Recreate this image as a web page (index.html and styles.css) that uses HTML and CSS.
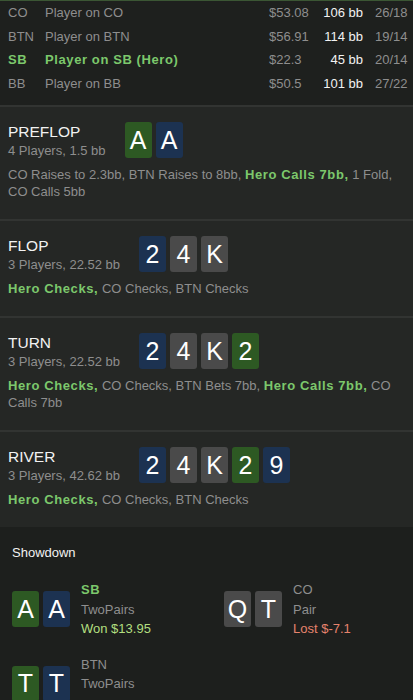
FILE: index.html
```html
<!DOCTYPE html>
<html lang="en">
<head>
<meta charset="UTF-8">
<meta name="viewport" content="width=device-width, initial-scale=1.0">
<title>Hand Replay</title>
<link rel="stylesheet" href="styles.css">
</head>
<body>
<div id="handView">
    <div class="players">
        <div class="player-row">
            <span class="pos">CO</span>
            <span class="name">Player on CO</span>
            <span class="stack">$53.08</span>
            <span class="bb">106 bb</span>
            <span class="ratio">26/18</span>
        </div>
        <div class="player-row">
            <span class="pos">BTN</span>
            <span class="name">Player on BTN</span>
            <span class="stack">$56.91</span>
            <span class="bb">114 bb</span>
            <span class="ratio">19/14</span>
        </div>
        <div class="player-row hero">
            <span class="pos">SB</span>
            <span class="name">Player on SB (Hero)</span>
            <span class="stack">$22.3</span>
            <span class="bb">45 bb</span>
            <span class="ratio">20/14</span>
        </div>
        <div class="player-row">
            <span class="pos">BB</span>
            <span class="name">Player on BB</span>
            <span class="stack">$50.5</span>
            <span class="bb">101 bb</span>
            <span class="ratio">27/22</span>
        </div>
    </div>

    <section class="street">
        <div class="street-head">
            <div class="street-info">
                <div class="street-name">PREFLOP</div>
                <div class="street-pot">4 Players, 1.5 bb</div>
            </div>
            <div class="board">
                <span class="card green">A</span>
                <span class="card blue">A</span>
            </div>
        </div>
        <p class="actions">CO Raises to 2.3bb, BTN Raises to 8bb, <b class="hero-act">Hero Calls 7bb,</b> 1 Fold, CO Calls 5bb</p>
    </section>

    <section class="street">
        <div class="street-head">
            <div class="street-info">
                <div class="street-name">FLOP</div>
                <div class="street-pot">3 Players, 22.52 bb</div>
            </div>
            <div class="board">
                <span class="card blue">2</span>
                <span class="card gray">4</span>
                <span class="card gray">K</span>
            </div>
        </div>
        <p class="actions"><b class="hero-act">Hero Checks,</b> CO Checks, BTN Checks</p>
    </section>

    <section class="street">
        <div class="street-head">
            <div class="street-info">
                <div class="street-name">TURN</div>
                <div class="street-pot">3 Players, 22.52 bb</div>
            </div>
            <div class="board">
                <span class="card blue">2</span>
                <span class="card gray">4</span>
                <span class="card gray">K</span>
                <span class="card green">2</span>
            </div>
        </div>
        <p class="actions"><b class="hero-act">Hero Checks,</b> CO Checks, BTN Bets 7bb, <b class="hero-act">Hero Calls 7bb,</b> CO Calls 7bb</p>
    </section>

    <section class="street">
        <div class="street-head">
            <div class="street-info">
                <div class="street-name">RIVER</div>
                <div class="street-pot">3 Players, 42.62 bb</div>
            </div>
            <div class="board">
                <span class="card blue">2</span>
                <span class="card gray">4</span>
                <span class="card gray">K</span>
                <span class="card green">2</span>
                <span class="card blue">9</span>
            </div>
        </div>
        <p class="actions"><b class="hero-act">Hero Checks,</b> CO Checks, BTN Checks</p>
    </section>

    <section class="showdown">
        <h3>Showdown</h3>
        <div class="hands">
            <div class="hand">
                <div class="board">
                    <span class="card green">A</span>
                    <span class="card blue">A</span>
                </div>
                <div class="hand-info">
                    <div class="hand-pos hero-act">SB</div>
                    <div>TwoPairs</div>
                    <div class="won">Won $13.95</div>
                </div>
            </div>
            <div class="hand">
                <div class="board">
                    <span class="card gray">Q</span>
                    <span class="card gray">T</span>
                </div>
                <div class="hand-info">
                    <div class="hand-pos">CO</div>
                    <div>Pair</div>
                    <div class="lost">Lost $-7.1</div>
                </div>
            </div>
            <div class="hand">
                <div class="board">
                    <span class="card green">T</span>
                    <span class="card blue">T</span>
                </div>
                <div class="hand-info">
                    <div class="hand-pos">BTN</div>
                    <div>TwoPairs</div>
                    <div>&nbsp;</div>
                </div>
            </div>
        </div>
    </section>
</div>
</body>
</html>
```

FILE: styles.css
```css
body {
    margin: 0;
    padding: 0;
    background-color: #1d1f1d;
    font-family: "Liberation Sans", Arial, sans-serif;
    font-size: 13px;
    color: #8e8e8e;
}
#handView {
    width: 413px;
}
.players {
    background-color: #1e201e;
    border-top: 1px solid #3b5634;
    padding-bottom: 10px;
}
.player-row {
    display: grid;
    grid-template-columns: 37px 224px 54px 40px 1fr;
    height: 23.5px;
    align-items: center;
    padding-left: 8px;
}
.player-row .bb {
    color: #f2f2f2;
    text-align: right;
}
.player-row .ratio {
    padding-left: 12px;
}
.player-row.hero .pos,
.player-row.hero .name {
    color: #7cc86c;
    font-weight: bold;
    letter-spacing: 0.6px;
}
.street {
    background-color: #252725;
    border-top: 2px solid #323432;
    padding: 15px 8px 19px;
}
.street-head {
    display: flex;
    align-items: flex-start;
}
.street-info {
    margin-right: 19px;
}
.street-name {
    color: #f2f2f2;
    font-size: 15.5px;
    line-height: 20px;
}
.street-pot {
    line-height: 17px;
}
.board {
    display: flex;
    gap: 4px;
}
.card {
    display: flex;
    align-items: center;
    justify-content: center;
    width: 27px;
    height: 36px;
    border-radius: 3px;
    color: #fff;
    font-size: 25px;
}
.card.green {
    background-color: #2d5923;
}
.card.blue {
    background-color: #1c3251;
}
.card.gray {
    background-color: #4a4a4a;
}
.actions {
    margin: 7px 0 0;
    line-height: 17px;
}
.hero-act {
    color: #7cc86c;
    font-weight: bold;
    letter-spacing: 0.6px;
}
.showdown {
    padding: 18px 12px 0;
}
.showdown h3 {
    margin: 0;
    color: #f2f2f2;
    font-size: 13px;
    font-weight: normal;
    line-height: 16px;
}
.hands {
    display: grid;
    grid-template-columns: 212px 1fr;
    row-gap: 16px;
    margin-top: 19px;
}
.hand {
    display: flex;
    align-items: center;
}
.hand-info {
    margin-left: 11px;
    line-height: 19.5px;
}
.won {
    color: #b3df80;
}
.lost {
    color: #e6836d;
}
```
